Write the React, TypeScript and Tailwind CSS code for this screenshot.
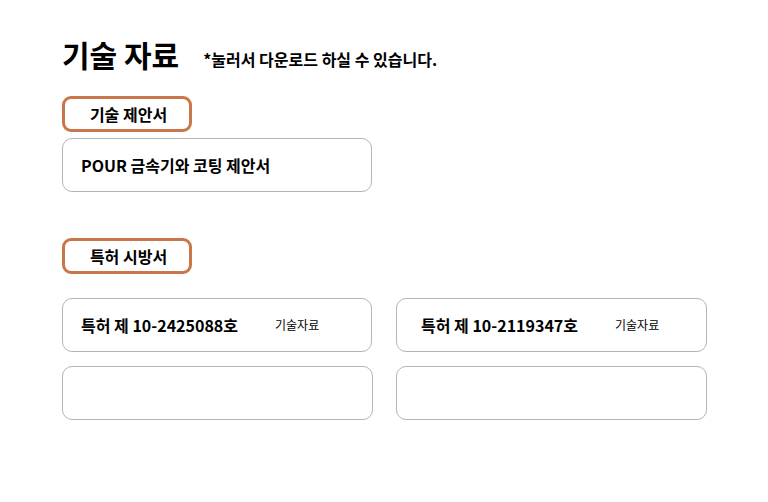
const PATENTS = [
  { label: '특허 제 10-2425088호', note: '기술자료', pad: 'pl-[18px]' },
  { label: '특허 제 10-2119347호', note: '기술자료', pad: 'pl-[24px]' },
]

function Tag({ children }: { children: string }) {
  return (
    <div className="w-[130px] h-[36px] border-[3px] border-[#c9764b] rounded-[9px] flex items-center justify-center pl-[3px] text-[16px] font-bold text-black">
      {children}
    </div>
  )
}

export default function App() {
  return (
    <div
      className="w-[768px] h-[502px] bg-white px-[62px] pt-[33px]"
      style={{ fontFamily: '"Noto Sans CJK KR", "Noto Sans", sans-serif' }}
    >
      {/* Heading */}
      <div className="flex items-end gap-[24px] h-[42px]">
        <h1 className="text-[30px] font-bold leading-[42px] text-black">기술 자료</h1>
        <span className="text-[16px] font-bold leading-[32px] text-black">*눌러서 다운로드 하실 수 있습니다.</span>
      </div>

      {/* Proposal */}
      <div className="mt-[21px]">
        <Tag>기술 제안서</Tag>
        <div className="mt-[6px] w-[310px] h-[54px] border border-[#b4b4bc] rounded-[10px] flex items-center px-[18px] text-[16px] font-bold text-black">
          POUR 금속기와 코팅 제안서
        </div>
      </div>

      {/* Patents */}
      <div className="mt-[46px]">
        <Tag>특허 시방서</Tag>
        <div className="mt-[24px] grid grid-cols-[310px_311px] gap-x-[24px] gap-y-[14px]">
          {PATENTS.map((p) => (
            <div
              key={p.label}
              className={`h-[54px] border border-[#b4b4bc] rounded-[10px] flex items-center ${p.pad} text-black`}
            >
              <span className="text-[16px] font-bold">{p.label}</span>
              <span className="ml-[37px] text-[12px]">{p.note}</span>
            </div>
          ))}
          <div className="h-[54px] w-[311px] border border-[#b4b4bc] rounded-[10px]" />
          <div className="h-[54px] w-[311px] border border-[#b4b4bc] rounded-[10px]" />
        </div>
      </div>
    </div>
  )
}
